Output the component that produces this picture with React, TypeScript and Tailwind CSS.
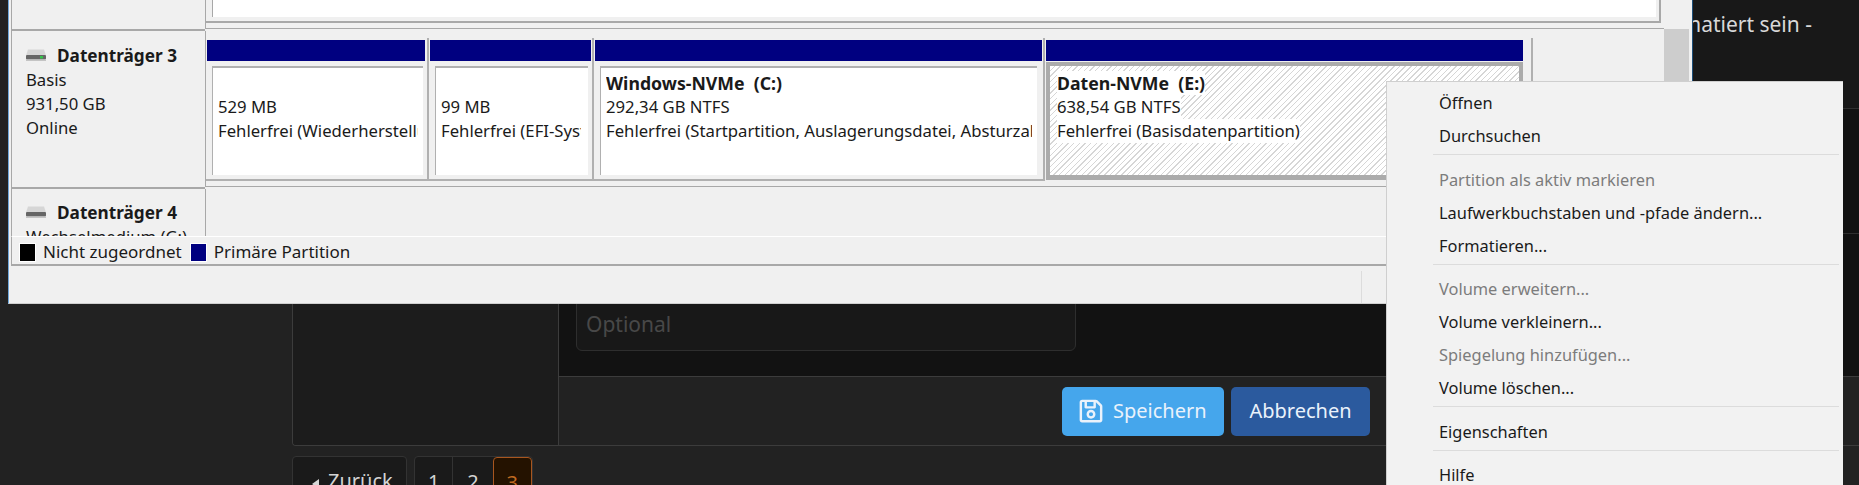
import React from "react";
import { FaRegSave } from "react-icons/fa";

const partitions = [
  { title: "", size: "529 MB", status: "Fehlerfrei (Wiederherstellungspartition)", cell: "w-[223px]", bar: "ml-[1px] mr-[2px]", box: "ml-[6px] mr-[4px]", clip: "mr-[5px]" },
  { title: "", size: "99 MB", status: "Fehlerfrei (EFI-Systempartition)", cell: "w-[165px]", bar: "ml-[1px] mr-[1px]", box: "ml-[6px] mr-[4px]", clip: "mr-[7px]" },
  { title: "Windows-NVMe  (C:)", size: "292,34 GB NTFS", status: "Fehlerfrei (Startpartition, Auslagerungsdatei, Absturzabbild)", cell: "w-[451px]", bar: "ml-[1px] mr-[1px]", box: "ml-[6px] mr-[6px]", clip: "mr-[5px]" },
];

const menu = [
  ["Öffnen", "Durchsuchen"],
  ["~Partition als aktiv markieren", "Laufwerkbuchstaben und -pfade ändern...", "Formatieren..."],
  ["~Volume erweitern...", "Volume verkleinern...", "~Spiegelung hinzufügen...", "Volume löschen..."],
  ["Eigenschaften"],
  ["Hilfe"],
];

function DriveIcon({ active }: { active?: boolean }) {
  return (
    <svg width="20" height="14" viewBox="0 0 20 14" className="shrink-0">
      <path d="M2 0.5h16l2 6H0z" fill="#d6d6d6" />
      <rect x="0" y="6" width="20" height="4.5" rx="1" fill="#666666" />
      <rect x="0" y="10.5" width="20" height="1.5" fill="#c4c4c4" />
      {active && <rect x="14" y="7" width="3" height="2.5" fill="#35c24a" />}
    </svg>
  );
}

export default function App() {
  return (
    <div className="relative h-[485px] w-[1859px] overflow-hidden bg-[#222222] [font-family:'Noto_Sans',sans-serif]">
      {/* PAGE BEHIND */}
      <div className="ml-[292px] flex h-[446px] overflow-hidden rounded-bl-[4px] border-b border-l border-[#3c3c3c]">
        <div className="w-[266px] shrink-0 border-r border-[#3c3c3c] bg-[#1c1c1c]" />
        <div className="flex flex-1 flex-col">
          <div className="flex h-[108px] justify-end bg-[#181818] pr-[47px] pt-[9px] text-[21px] leading-[30px] text-[#d8d8d8]">
            Die Partition muss NTFS formatiert sein -
          </div>
          <div className="h-[125px] border-t border-[#303030] bg-[#121212]" />
          <div className="h-[143px] border-t border-[#303030] bg-[#121212] pl-[17px] pt-[10px]">
            <div className="flex h-[107px] w-[500px] items-end rounded-[6px] border border-[#2e2e2e] bg-[#181818] pb-[11px] pl-[9px] text-[21px] leading-[30px] text-[#484848]">
              Optional
            </div>
          </div>
          <div className="flex h-[69px] items-center gap-[7px] border-t border-[#3c3c3c] pl-[503px] text-[20px] text-[#eaf2fb]">
            <button className="flex h-[49px] w-[162px] items-center gap-[9px] rounded-[5px] bg-[#45a6ec] pl-[16px]">
              <FaRegSave size={26} />
              Speichern
            </button>
            <button className="h-[49px] w-[139px] rounded-[5px] bg-[#2b5a9e]">Abbrechen</button>
          </div>
        </div>
      </div>

      <div className="ml-[292px] mt-[10px] flex gap-[7px] text-[20px] leading-[50px] text-[#d4d4d4]">
        <div className="flex h-[50px] w-[115px] items-center gap-[9px] rounded-t-[4px] border border-[#333333] bg-[#1a1a1a] pl-[19px]">
          <span className="mt-[6px] h-0 w-0 border-y-[5px] border-r-[7px] border-y-transparent border-r-[#d8d8d8]" />
          Zurück
        </div>
        <div className="flex h-[50px] w-[119px] overflow-hidden rounded-t-[4px] border border-[#333333] bg-[#1a1a1a]">
          <div className="w-[39px] border-r border-[#333333] text-center">1</div>
          <div className="w-[40px] text-center">2</div>
          <div className="w-[40px] rounded-t-[4px] border border-[#a8561f] bg-[#241200] text-center text-[#c06a20]">3</div>
        </div>
      </div>

      {/* DISK MANAGEMENT WINDOW */}
      <div className="absolute left-[8px] top-0 flex h-[304px] w-[1685px] flex-col border-b border-l border-r border-b-[#d0d0d0] border-l-[#6fa8dc] border-r-[#1d4f7a] bg-[#f0f0f0] text-[#1a1a1a]">
        <div className="flex h-[236px] overflow-hidden">
          <div className="flex-1">
            {/* row above */}
            <div className="flex h-[31px]">
              <div className="ml-[2px] h-[31px] w-[194px] shrink-0 border-b-2 border-l border-[#a8a8a8]" />
              <div className="h-[29px] flex-1 border-b border-l border-[#a8a8a8]">
                <div className="mr-[3px] h-[23px] border-b-2 border-r-2 border-[#a8a8a8] pl-[6px] pr-[3px]">
                  <div className="h-[17px] border-l border-[#a8a8a8] bg-white" />
                </div>
              </div>
            </div>

            {/* Datenträger 3 */}
            <div className="flex h-[158px]">
              <div className="ml-[2px] h-[158px] w-[194px] shrink-0 border-b-2 border-l border-[#a8a8a8] pl-[14px] pt-[13px] text-[16.7px] leading-[24px]">
                <div className="flex items-center gap-[11px] text-[17.2px] font-bold">
                  <DriveIcon active />
                  Datenträger 3
                </div>
                <div>Basis</div>
                <div>931,50 GB</div>
                <div>Online</div>
              </div>
              <div className="h-[156px] flex-1 border-b border-l border-[#a8a8a8] pt-[7px]">
                <div className="flex h-[143px]">
                  {partitions.map((p, i) => (
                    <div key={i} className={`${p.cell} shrink-0 border-b-2 border-r-2 border-[#b0b0b0] pt-[2px]`}>
                      <div className={`${p.bar} h-[21px] bg-[#000080]`} />
                      <div className={`${p.box} mt-[5px] h-[109px] border-l border-t-2 border-[#b0b0b0] bg-white pl-[5px] pt-[3px]`}>
                        <div className={`${p.clip} overflow-hidden whitespace-pre text-[16.7px] leading-[24px]`}>
                          <div className="h-[24px] text-[17.7px] font-bold">{p.title}</div>
                          <div>{p.size}</div>
                          <div>{p.status}</div>
                        </div>
                      </div>
                    </div>
                  ))}
                  <div className="w-[488px] shrink-0 border-r-2 border-[#b0b0b0] pr-[8px] pt-[2px]">
                    <div className="ml-[1px] h-[21px] bg-[#000080]" />
                    <div className="ml-[1px] mt-[1px] h-[118px] border-[4px] border-b-[5px] border-[#ababab] bg-[repeating-linear-gradient(135deg,#ffffff,#ffffff_3px,#d6d6d6_3px,#d6d6d6_4px)] pl-[7px] pt-[5px]">
                      <div className="text-[16.7px] leading-[24px]">
                        <div className="w-fit whitespace-pre bg-white text-[17.7px] font-bold">Daten-NVMe  (E:)</div>
                        <div className="w-fit bg-white">638,54 GB NTFS</div>
                        <div className="w-fit bg-white">Fehlerfrei (Basisdatenpartition)</div>
                      </div>
                    </div>
                  </div>
                </div>
              </div>
            </div>

            {/* Datenträger 4 */}
            <div className="flex h-[60px]">
              <div className="ml-[2px] w-[194px] shrink-0 border-l border-[#a8a8a8] pl-[14px] pt-[12px] text-[16.7px] leading-[24px]">
                <div className="flex items-center gap-[11px] text-[17.2px] font-bold">
                  <DriveIcon />
                  Datenträger 4
                </div>
                <div>Wechselmedium (G:)</div>
              </div>
              <div className="flex-1 border-l border-[#a8a8a8]" />
            </div>
          </div>

          {/* scrollbar */}
          <div className="w-[28px] shrink-0 pr-[3px] pt-[29px]">
            <div className="h-[120px] bg-[#cdcdcd]" />
          </div>
        </div>

        {/* legend */}
        <div className="ml-[2px] flex h-[30px] items-center border-b-2 border-l border-t border-b-[#a8a8a8] border-l-[#a8a8a8] border-t-white pl-[7px] pt-[3px] text-[17px]">
          <span className="h-[19px] w-[17px] border border-white bg-black" />
          <span className="ml-[7px]">Nicht zugeordnet</span>
          <span className="ml-[8px] h-[19px] w-[17px] border border-white bg-[#000080]" />
          <span className="ml-[7px]">Primäre Partition</span>
        </div>

        {/* status bar */}
        <div className="flex flex-1 justify-end pt-[5px]">
          <div className="mr-[330px] h-full border-l border-[#dcdcdc]" />
        </div>
      </div>

      {/* CONTEXT MENU */}
      <div className="absolute left-[1386px] top-[81px] h-[420px] w-[457px] border-l border-t border-[#cfcfcf] bg-[#f2f2f2] pt-[4px] text-[16.4px] leading-[33px] text-[#1a1a1a]">
        {menu.map((group, i) => (
          <div key={i}>
            {i > 0 && (
              <div className="h-[10.5px] pt-[2px]">
                <div className="ml-[46px] mr-[4px] h-px bg-[#dcdcdc]" />
              </div>
            )}
            {group.map((item) =>
              item.startsWith("~") ? (
                <div key={item} className="h-[33px] pl-[52px] text-[#7c7c7c]">
                  {item.slice(1)}
                </div>
              ) : (
                <div key={item} className="h-[33px] pl-[52px]">
                  {item}
                </div>
              )
            )}
          </div>
        ))}
      </div>
    </div>
  );
}
